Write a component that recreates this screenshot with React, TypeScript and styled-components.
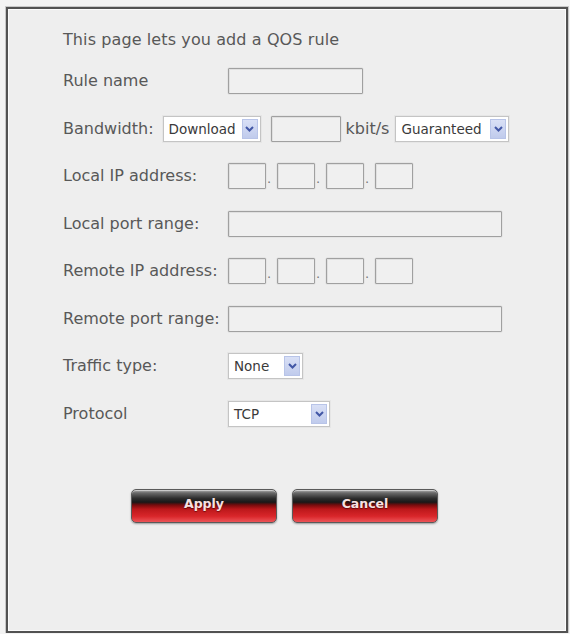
import React from 'react';
import styled, { createGlobalStyle } from 'styled-components';

const GlobalStyle = createGlobalStyle`
  html, body {
    margin: 0;
    padding: 0;
    background: #f3f3f3;
  }
  body {
    font-family: "DejaVu Sans", Verdana, sans-serif;
  }
`;

const Frame = styled.div`
  box-sizing: border-box;
  width: 562px;
  height: 626px;
  margin: 7px 0 0 6px;
  border: 2px solid #525252;
  box-shadow: inset 0 0 0 1px #fbfbfb, 0 0 0 1px #c8c8c8;
  background: #eeeeee;
  padding: 21px 0 0 55px;
  color: #585858;
`;

const Intro = styled.div`
  font-size: 16px;
  line-height: 20px;
  letter-spacing: 0.1px;
  margin-bottom: 18px;
`;

const Form = styled.div`
  display: grid;
  grid-template-columns: 165px auto;
  row-gap: 21.5px;
  align-items: center;
`;

const Label = styled.div`
  font-size: 16px;
  line-height: 26px;
  white-space: nowrap;
`;

const Field = styled.div`
  display: flex;
  align-items: center;
  height: 26px;
`;

// bandwidth row runs across both columns
const InlineRow = styled.div`
  grid-column: 1 / span 2;
  display: flex;
  align-items: center;
  height: 26px;
  font-size: 16px;
`;

const RowLabel = styled.span`
  margin-right: 9px;
`;

const TextBox = styled.div<{ width: number; gapBefore?: number }>`
  box-sizing: border-box;
  width: ${(p) => p.width}px;
  height: 26px;
  margin-left: ${(p) => p.gapBefore ?? 0}px;
  border: 1.5px solid #a0a0a0;
  border-radius: 1px;
  background: #f0f0f0;
  box-shadow: inset 1px 1px 0 #e0e0e0, 0 0 0 0.5px #dcdcdc;
`;

const Dot = styled.span`
  width: 11px;
  height: 26px;
  display: flex;
  align-items: flex-end;
  padding-left: 1px;
  box-sizing: border-box;
  font-size: 13px;
  line-height: 20px;
  color: #777;
`;

const Select = styled.div<{ width: number }>`
  box-sizing: border-box;
  width: ${(p) => p.width}px;
  height: 26px;
  display: flex;
  align-items: center;
  justify-content: space-between;
  background: #ffffff;
  border: 1px solid #c4c4c4;
  box-shadow: 0 0 0 1px #e6e6e6;
  padding: 2px 2px 2px 5px;
  font-size: 13.5px;
  color: #3a3a3a;
`;

const DropButton = styled.span`
  width: 16px;
  height: 20px;
  display: flex;
  align-items: center;
  justify-content: center;
  background: linear-gradient(to bottom, #d9e0f6, #c0cbec);
  border: 1px solid #b8c4e8;
  box-sizing: border-box;
`;

const Unit = styled.span`
  margin: 0 6px 0 5px;
`;

const Buttons = styled.div`
  display: flex;
  gap: 15px;
  margin: 62px 0 0 68px;
`;

const RedButton = styled.button`
  width: 146px;
  height: 34px;
  border: 1px solid #5a5a5a;
  border-radius: 5px;
  background: linear-gradient(
    to bottom,
    #b4b4b4 0%,
    #6a6a6a 9%,
    #2e2e2e 26%,
    #181818 38%,
    #760b0c 47%,
    #bc181b 60%,
    #d9262a 82%,
    #ec5458 100%
  );
  box-shadow: 0 1px 2px rgba(0, 0, 0, 0.35), inset 0 1px 0 rgba(255, 255, 255, 0.4);
  color: #f6e2e2;
  font-family: "DejaVu Sans", Verdana, sans-serif;
  font-weight: bold;
  font-size: 12.5px;
  text-shadow: 0 1px 1px rgba(60, 0, 0, 0.6);
  padding: 0 0 4px 0;
  cursor: pointer;
`;

const Chevron = () => (
  <svg width="9" height="6" viewBox="0 0 9 6">
    <path d="M1 1 L4.5 4.5 L8 1" fill="none" stroke="#4257a6" strokeWidth="2" />
  </svg>
);

const Dropdown: React.FC<{ width: number; value: string }> = ({ width, value }) => (
  <Select width={width}>
    <span>{value}</span>
    <DropButton>
      <Chevron />
    </DropButton>
  </Select>
);

const IpAddress = () => (
  <Field>
    <TextBox width={38} />
    <Dot>.</Dot>
    <TextBox width={38} />
    <Dot>.</Dot>
    <TextBox width={38} />
    <Dot>.</Dot>
    <TextBox width={38} />
  </Field>
);

export default function App() {
  return (
    <>
      <GlobalStyle />
      <Frame>
        <Intro>This page lets you add a QOS rule</Intro>
        <Form>
          <Label>Rule name</Label>
          <Field>
            <TextBox width={135} />
          </Field>

          <InlineRow>
            <RowLabel>Bandwidth:</RowLabel>
            <Dropdown width={98} value="Download" />
            <TextBox width={70} gapBefore={10} />
            <Unit>kbit/s</Unit>
            <Dropdown width={114} value="Guaranteed" />
          </InlineRow>

          <Label>Local IP address:</Label>
          <IpAddress />

          <Label>Local port range:</Label>
          <Field>
            <TextBox width={274} />
          </Field>

          <Label>Remote IP address:</Label>
          <IpAddress />

          <Label>Remote port range:</Label>
          <Field>
            <TextBox width={274} />
          </Field>

          <Label>Traffic type:</Label>
          <Field>
            <Dropdown width={75} value="None" />
          </Field>

          <Label>Protocol</Label>
          <Field>
            <Dropdown width={102} value="TCP" />
          </Field>
        </Form>
        <Buttons>
          <RedButton>Apply</RedButton>
          <RedButton>Cancel</RedButton>
        </Buttons>
      </Frame>
    </>
  );
}
